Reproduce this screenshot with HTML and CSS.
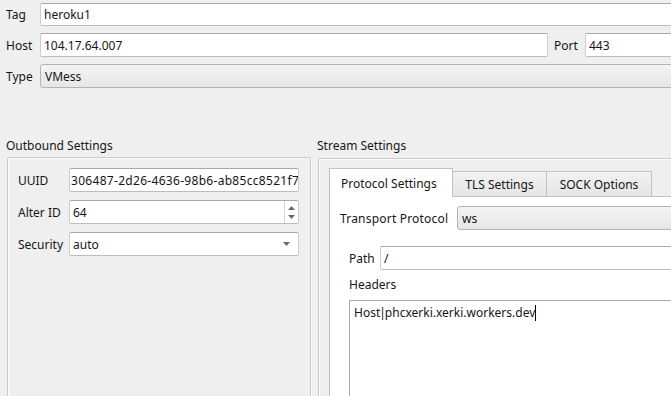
FILE: index.html
```html
<!DOCTYPE html>
<html>
<head>
<meta charset="utf-8">
<link rel="stylesheet" href="styles.css">
</head>
<body>
<div class="window">
  <div class="top">
    <div class="row r-tag">
      <span class="lbl">Tag</span>
      <div class="field grow">heroku1</div>
    </div>
    <div class="row r-host">
      <span class="lbl">Host</span>
      <div class="field host">104.17.64.007</div>
      <span class="lbl port-lbl">Port</span>
      <div class="field grow">443</div>
    </div>
    <div class="row r-type">
      <span class="lbl">Type</span>
      <div class="combo grow">VMess</div>
    </div>
  </div>

  <div class="groups">
    <section class="group outbound">
      <div class="g-title">Outbound Settings</div>
      <div class="g-box">
        <div class="form">
          <span class="f-lbl">UUID</span>
          <div class="field uuid">306487-2d26-4636-98b6-ab85cc8521f7</div>
          <span class="f-lbl">Alter ID</span>
          <div class="field spin">
            <span class="grow">64</span>
            <span class="spin-btns">
              <svg width="7" height="4" viewBox="0 0 7 4"><path d="M0 4 L3.5 0 L7 4 Z" fill="#6a6a6a"/></svg>
              <svg width="7" height="4" viewBox="0 0 7 4"><path d="M0 0 L3.5 4 L7 0 Z" fill="#6a6a6a"/></svg>
            </span>
          </div>
          <span class="f-lbl">Security</span>
          <div class="field sel">
            <span class="grow">auto</span>
            <svg class="arrow" width="7" height="4" viewBox="0 0 7 4"><path d="M0 0 L3.5 4 L7 0 Z" fill="#6a6a6a"/></svg>
          </div>
        </div>
      </div>
    </section>

    <section class="group stream">
      <div class="g-title">Stream Settings</div>
      <div class="g-box">
        <div class="tabs">
          <div class="tabbar">
            <div class="tab active">Protocol Settings</div>
            <div class="tab">TLS Settings</div>
            <div class="tab">SOCK Options</div>
          </div>
          <div class="pane">
            <div class="tp-row">
              <span class="tp-lbl">Transport Protocol</span>
              <div class="combo grow">ws</div>
            </div>
            <div class="inner">
              <div class="path-row">
                <span class="path-lbl">Path</span>
                <div class="field grow">/</div>
              </div>
              <div class="hdr-lbl">Headers</div>
              <div class="textarea">Host<span class="pipe">|</span>phcxerki.xerki.workers.dev<span class="caret"></span></div>
            </div>
          </div>
        </div>
      </div>
    </section>
  </div>
</div>
</body>
</html>
```

FILE: styles.css
```css
html, body {
  margin: 0;
  padding: 0;
}
body {
  background: #efefef;
  font-family: "Noto Sans", "Liberation Sans", sans-serif;
  font-size: 12px;
  color: #161616;
  width: 671px;
  height: 396px;
  overflow: hidden;
}
.window {
  width: 760px;
}

.top {
  padding: 3px 0 0 6px;
  display: flex;
  flex-direction: column;
  gap: 7px;
}
.row {
  display: flex;
  align-items: center;
  height: 24px;
}
.r-tag { height: 23px; }
.lbl {
  width: 34px;
  flex: none;
}
.port-lbl {
  width: 31px;
  margin-left: 6px;
}
.grow { flex: 1; }

.field {
  box-sizing: border-box;
  height: 100%;
  background: #fff;
  border: 1px solid;
  border-color: #a9a9a9 #cdcdcd #bdbdbd #cdcdcd;
  border-radius: 2px;
  padding-left: 3px;
  display: flex;
  align-items: center;
  white-space: nowrap;
}
.host {
  width: 508px;
  flex: none;
}
.combo {
  box-sizing: border-box;
  height: 100%;
  border: 1px solid #b4b4b4;
  border-radius: 3px;
  background: linear-gradient(#f4f4f4, #e6e6e6);
  padding-left: 4px;
  display: flex;
  align-items: center;
}

.groups {
  margin-top: 50px;
  padding-left: 7px;
  display: grid;
  grid-template-columns: 304px 1fr;
  column-gap: 7px;
}
.g-title {
  height: 16px;
  line-height: 16px;
  margin: 0 0 3px -1px;
}
.stream .g-title {
  margin-left: -1px;
  margin-bottom: 4px;
}
.g-box {
  border: 1px solid #cbcbcb;
  box-shadow: inset 1px 1px 0 #fafafa, 1px 1px 0 #fafafa;
  border-radius: 2px;
  height: 260px;
  box-sizing: border-box;
}

.form {
  padding: 10px 11px 0 10px;
  display: grid;
  grid-template-columns: 51px 1fr;
  grid-auto-rows: 24px;
  row-gap: 8px;
  align-items: center;
}
.uuid {
  padding-left: 1px;
  letter-spacing: 0.3px;
  overflow: hidden;
}
.spin {
  padding-right: 0;
}
.spin-btns {
  width: 13px;
  height: 100%;
  border-left: 1px solid #d6d6d6;
  display: flex;
  flex-direction: column;
  align-items: center;
  justify-content: center;
  gap: 5px;
}
.sel .arrow {
  margin-right: 8px;
}

.stream .g-box {
  padding: 9px 0 0 10px;
}
.tabbar {
  display: flex;
  align-items: flex-end;
  height: 28px;
  position: relative;
  z-index: 1;
}
.tab {
  box-sizing: border-box;
  height: 25px;
  padding: 0 10px;
  border: 1px solid #c2c2c2;
  border-bottom: none;
  background: linear-gradient(#f2f2f2, #e6e6e6);
  display: flex;
  align-items: center;
  margin-left: -1px;
}
.tab:first-child { margin-left: 0; }
.tab.active {
  height: 29px;
  margin-bottom: -1px;
  background: #fff;
  padding: 0 11px;
  width: 124px;
}
.tab:nth-child(2) { width: 95px; justify-content: center; }
.tab:nth-child(3) { width: 106px; justify-content: center; }
.pane {
  border: 1px solid #c2c2c2;
  border-right: none;
  background: #fff;
  height: 230px;
  padding: 9px 0 0 10px;
}
.tp-row {
  display: flex;
  align-items: center;
  height: 24px;
}
.tp-lbl {
  width: 117px;
  flex: none;
  letter-spacing: 0.2px;
}
.inner {
  padding: 16px 0 0 9px;
}
.path-row {
  display: flex;
  align-items: center;
  height: 24px;
}
.path-lbl {
  width: 31px;
  flex: none;
}
.hdr-lbl {
  margin-top: 7px;
  height: 16px;
  line-height: 16px;
}
.textarea {
  margin-top: 7px;
  border: 1px solid #a9a9a9;
  border-right-color: #cdcdcd;
  background: #fff;
  height: 120px;
  padding: 4px 4px;
  line-height: 16px;
  white-space: nowrap;
}
.pipe {
  margin: 0 -1px;
}
.caret {
  display: inline-block;
  width: 1px;
  height: 16px;
  background: #000;
  vertical-align: top;
}
```
